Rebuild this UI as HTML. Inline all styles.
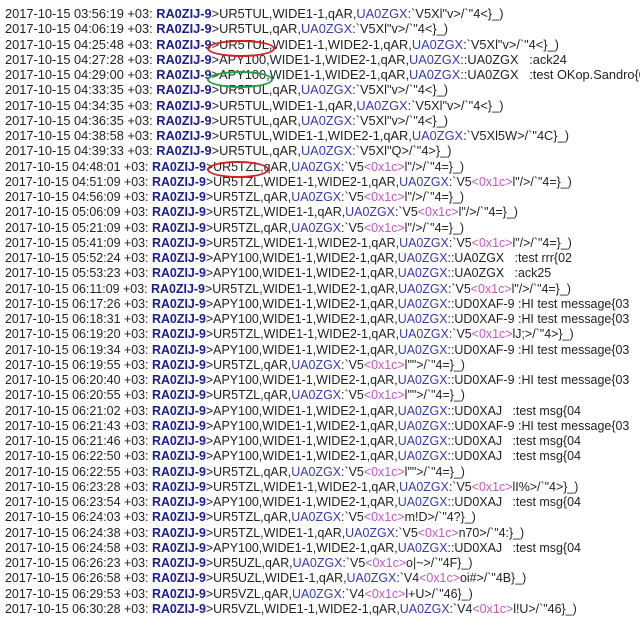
<!DOCTYPE html>
<html><head><meta charset="utf-8"><style>
body{margin:0;background:#fff;width:640px;height:623px;overflow:hidden;position:relative;font-family:"Liberation Sans",sans-serif;font-size:12.8px;color:#222}
#w{position:absolute;left:5px;top:6px}
.l{white-space:pre;height:15.26px;line-height:15.26px;transform-origin:0 50%}
.n{transform:scaleX(0.972)}
b{color:#1c1c8a}
.u{color:#3a3aa8}
.m{color:#c058c0}
.e{position:absolute;border:2px solid;border-radius:50%}
</style></head><body>
<div id="w">
<div class="l">2017-10-15 03:56:19 +03: <b>RA0ZIJ-9</b>&gt;UR5TUL,WIDE1-1,qAR,<span class="u">UA0ZGX</span>:`V5Xl"v&gt;/`"4&lt;}_)</div>
<div class="l">2017-10-15 04:06:19 +03: <b>RA0ZIJ-9</b>&gt;UR5TUL,qAR,<span class="u">UA0ZGX</span>:`V5Xl"v&gt;/`"4&lt;}_)</div>
<div class="l">2017-10-15 04:25:48 +03: <b>RA0ZIJ-9</b>&gt;UR5TUL,WIDE1-1,WIDE2-1,qAR,<span class="u">UA0ZGX</span>:`V5Xl"v&gt;/`"4&lt;}_)</div>
<div class="l">2017-10-15 04:27:28 +03: <b>RA0ZIJ-9</b>&gt;APY100,WIDE1-1,WIDE2-1,qAR,<span class="u">UA0ZGX</span>::UA0ZGX   :ack24</div>
<div class="l">2017-10-15 04:29:00 +03: <b>RA0ZIJ-9</b>&gt;APY100,WIDE1-1,WIDE2-1,qAR,<span class="u">UA0ZGX</span>::UA0ZGX   :test OKop.Sandro{01</div>
<div class="l">2017-10-15 04:33:35 +03: <b>RA0ZIJ-9</b>&gt;UR5TUL,qAR,<span class="u">UA0ZGX</span>:`V5Xl"v&gt;/`"4&lt;}_)</div>
<div class="l">2017-10-15 04:34:35 +03: <b>RA0ZIJ-9</b>&gt;UR5TUL,WIDE1-1,qAR,<span class="u">UA0ZGX</span>:`V5Xl"v&gt;/`"4&lt;}_)</div>
<div class="l">2017-10-15 04:36:35 +03: <b>RA0ZIJ-9</b>&gt;UR5TUL,qAR,<span class="u">UA0ZGX</span>:`V5Xl"v&gt;/`"4&lt;}_)</div>
<div class="l">2017-10-15 04:38:58 +03: <b>RA0ZIJ-9</b>&gt;UR5TUL,WIDE1-1,WIDE2-1,qAR,<span class="u">UA0ZGX</span>:`V5Xl5W&gt;/`"4C}_)</div>
<div class="l">2017-10-15 04:39:33 +03: <b>RA0ZIJ-9</b>&gt;UR5TUL,qAR,<span class="u">UA0ZGX</span>:`V5Xl"Q&gt;/`"4&gt;}_)</div>
<div class="l n">2017-10-15 04:48:01 +03: <b>RA0ZIJ-9</b>&gt;UR5TZL,qAR,<span class="u">UA0ZGX</span>:`V5<span class="m">&lt;0x1c&gt;</span>l"/&gt;/`"4=}_)</div>
<div class="l n">2017-10-15 04:51:09 +03: <b>RA0ZIJ-9</b>&gt;UR5TZL,WIDE1-1,WIDE2-1,qAR,<span class="u">UA0ZGX</span>:`V5<span class="m">&lt;0x1c&gt;</span>l"/&gt;/`"4=}_)</div>
<div class="l n">2017-10-15 04:56:09 +03: <b>RA0ZIJ-9</b>&gt;UR5TZL,qAR,<span class="u">UA0ZGX</span>:`V5<span class="m">&lt;0x1c&gt;</span>l"/&gt;/`"4=}_)</div>
<div class="l n">2017-10-15 05:06:09 +03: <b>RA0ZIJ-9</b>&gt;UR5TZL,WIDE1-1,qAR,<span class="u">UA0ZGX</span>:`V5<span class="m">&lt;0x1c&gt;</span>l"/&gt;/`"4=}_)</div>
<div class="l n">2017-10-15 05:21:09 +03: <b>RA0ZIJ-9</b>&gt;UR5TZL,qAR,<span class="u">UA0ZGX</span>:`V5<span class="m">&lt;0x1c&gt;</span>l"/&gt;/`"4=}_)</div>
<div class="l n">2017-10-15 05:41:09 +03: <b>RA0ZIJ-9</b>&gt;UR5TZL,WIDE1-1,WIDE2-1,qAR,<span class="u">UA0ZGX</span>:`V5<span class="m">&lt;0x1c&gt;</span>l"/&gt;/`"4=}_)</div>
<div class="l n">2017-10-15 05:52:24 +03: <b>RA0ZIJ-9</b>&gt;APY100,WIDE1-1,WIDE2-1,qAR,<span class="u">UA0ZGX</span>::UA0ZGX   :test rrr{02</div>
<div class="l n">2017-10-15 05:53:23 +03: <b>RA0ZIJ-9</b>&gt;APY100,WIDE1-1,WIDE2-1,qAR,<span class="u">UA0ZGX</span>::UA0ZGX   :ack25</div>
<div class="l n">2017-10-15 06:11:09 +03: <b>RA0ZIJ-9</b>&gt;UR5TZL,WIDE1-1,WIDE2-1,qAR,<span class="u">UA0ZGX</span>:`V5<span class="m">&lt;0x1c&gt;</span>l"/&gt;/`"4=}_)</div>
<div class="l n">2017-10-15 06:17:26 +03: <b>RA0ZIJ-9</b>&gt;APY100,WIDE1-1,WIDE2-1,qAR,<span class="u">UA0ZGX</span>::UD0XAF-9 :HI test message{03</div>
<div class="l n">2017-10-15 06:18:31 +03: <b>RA0ZIJ-9</b>&gt;APY100,WIDE1-1,WIDE2-1,qAR,<span class="u">UA0ZGX</span>::UD0XAF-9 :HI test message{03</div>
<div class="l n">2017-10-15 06:19:20 +03: <b>RA0ZIJ-9</b>&gt;UR5TZL,WIDE1-1,WIDE2-1,qAR,<span class="u">UA0ZGX</span>:`V5<span class="m">&lt;0x1c&gt;</span>lJ;&gt;/`"4&gt;}_)</div>
<div class="l n">2017-10-15 06:19:34 +03: <b>RA0ZIJ-9</b>&gt;APY100,WIDE1-1,WIDE2-1,qAR,<span class="u">UA0ZGX</span>::UD0XAF-9 :HI test message{03</div>
<div class="l n">2017-10-15 06:19:55 +03: <b>RA0ZIJ-9</b>&gt;UR5TZL,qAR,<span class="u">UA0ZGX</span>:`V5<span class="m">&lt;0x1c&gt;</span>l""&gt;/`"4=}_)</div>
<div class="l n">2017-10-15 06:20:40 +03: <b>RA0ZIJ-9</b>&gt;APY100,WIDE1-1,WIDE2-1,qAR,<span class="u">UA0ZGX</span>::UD0XAF-9 :HI test message{03</div>
<div class="l n">2017-10-15 06:20:55 +03: <b>RA0ZIJ-9</b>&gt;UR5TZL,qAR,<span class="u">UA0ZGX</span>:`V5<span class="m">&lt;0x1c&gt;</span>l""&gt;/`"4=}_)</div>
<div class="l n">2017-10-15 06:21:02 +03: <b>RA0ZIJ-9</b>&gt;APY100,WIDE1-1,WIDE2-1,qAR,<span class="u">UA0ZGX</span>::UD0XAJ   :test msg{04</div>
<div class="l n">2017-10-15 06:21:43 +03: <b>RA0ZIJ-9</b>&gt;APY100,WIDE1-1,WIDE2-1,qAR,<span class="u">UA0ZGX</span>::UD0XAF-9 :HI test message{03</div>
<div class="l n">2017-10-15 06:21:46 +03: <b>RA0ZIJ-9</b>&gt;APY100,WIDE1-1,WIDE2-1,qAR,<span class="u">UA0ZGX</span>::UD0XAJ   :test msg{04</div>
<div class="l n">2017-10-15 06:22:50 +03: <b>RA0ZIJ-9</b>&gt;APY100,WIDE1-1,WIDE2-1,qAR,<span class="u">UA0ZGX</span>::UD0XAJ   :test msg{04</div>
<div class="l n">2017-10-15 06:22:55 +03: <b>RA0ZIJ-9</b>&gt;UR5TZL,qAR,<span class="u">UA0ZGX</span>:`V5<span class="m">&lt;0x1c&gt;</span>l""&gt;/`"4=}_)</div>
<div class="l n">2017-10-15 06:23:28 +03: <b>RA0ZIJ-9</b>&gt;UR5TZL,WIDE1-1,WIDE2-1,qAR,<span class="u">UA0ZGX</span>:`V5<span class="m">&lt;0x1c&gt;</span>lI%&gt;/`"4&gt;}_)</div>
<div class="l n">2017-10-15 06:23:54 +03: <b>RA0ZIJ-9</b>&gt;APY100,WIDE1-1,WIDE2-1,qAR,<span class="u">UA0ZGX</span>::UD0XAJ   :test msg{04</div>
<div class="l n">2017-10-15 06:24:03 +03: <b>RA0ZIJ-9</b>&gt;UR5TZL,qAR,<span class="u">UA0ZGX</span>:`V5<span class="m">&lt;0x1c&gt;</span>m!D&gt;/`"4?}_)</div>
<div class="l n">2017-10-15 06:24:38 +03: <b>RA0ZIJ-9</b>&gt;UR5TZL,WIDE1-1,qAR,<span class="u">UA0ZGX</span>:`V5<span class="m">&lt;0x1c&gt;</span>n70&gt;/`"4:}_)</div>
<div class="l n">2017-10-15 06:24:58 +03: <b>RA0ZIJ-9</b>&gt;APY100,WIDE1-1,WIDE2-1,qAR,<span class="u">UA0ZGX</span>::UD0XAJ   :test msg{04</div>
<div class="l n">2017-10-15 06:26:23 +03: <b>RA0ZIJ-9</b>&gt;UR5UZL,qAR,<span class="u">UA0ZGX</span>:`V5<span class="m">&lt;0x1c&gt;</span>o|~&gt;/`"4F}_)</div>
<div class="l n">2017-10-15 06:26:58 +03: <b>RA0ZIJ-9</b>&gt;UR5UZL,WIDE1-1,qAR,<span class="u">UA0ZGX</span>:`V4<span class="m">&lt;0x1c&gt;</span>oi#&gt;/`"4B}_)</div>
<div class="l n">2017-10-15 06:29:53 +03: <b>RA0ZIJ-9</b>&gt;UR5VZL,qAR,<span class="u">UA0ZGX</span>:`V4<span class="m">&lt;0x1c&gt;</span>l+U&gt;/`"46}_)</div>
<div class="l n">2017-10-15 06:30:28 +03: <b>RA0ZIJ-9</b>&gt;UR5VZL,WIDE1-1,WIDE2-1,qAR,<span class="u">UA0ZGX</span>:`V4<span class="m">&lt;0x1c&gt;</span>l!U&gt;/`"46}_)</div>
</div>
<div class="e" style="left:207px;top:40px;width:64px;height:13px;border-color:#d42020"></div>
<div class="e" style="left:207px;top:71px;width:62px;height:13px;border-color:#20a040"></div>
<div class="e" style="left:207px;top:161px;width:58px;height:13px;border-color:#d42020"></div>
</body></html>
